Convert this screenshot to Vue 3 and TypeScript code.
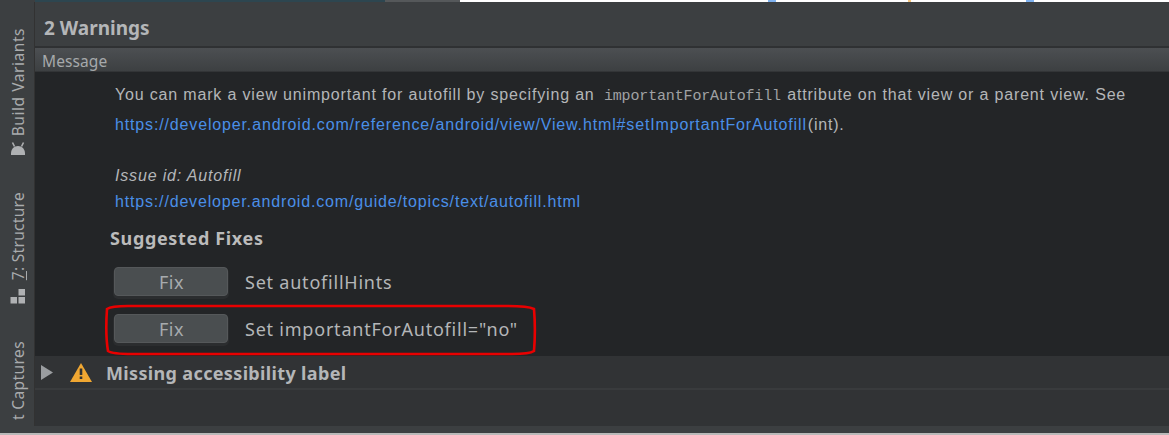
<script setup lang="ts">
const fixes = [
  { label: 'Set autofillHints', marked: false },
  { label: 'Set importantForAutofill="no"', marked: true },
]
</script>

<template>
  <div class="window">
    <div class="topstrip">
      <span class="seg seg-side"></span>
      <span class="seg seg-teal"></span>
      <span class="seg seg-grey"></span>
      <span class="seg seg-white">
        <i class="bit bit-a"></i>
        <i class="bit bit-b"></i>
        <i class="bit bit-c"></i>
      </span>
    </div>
    <div class="body">
      <aside class="sidebar">
        <div class="tab tab-build">
          <span class="tab-label">Build Variants</span>
          <svg class="tab-icon" width="16" height="14" viewBox="0 0 16 14">
            <path d="M1 12.5C1 8 4 5 8 5s7 3 7 7.5z" fill="#afb1b3" />
            <path d="M1 14h14v-2H1z" fill="#afb1b3" />
            <path d="M4.5 5.5 2.5 1.5M11.5 5.5l2-4" stroke="#afb1b3" stroke-width="1.6" />
          </svg>
        </div>
        <div class="tab tab-structure">
          <span class="tab-label"><u>7</u>: Structure</span>
          <svg class="tab-icon tab-icon-far" width="16" height="15" viewBox="0 0 16 15">
            <rect x="0.5" y="8" width="6.5" height="6.5" fill="#afb1b3" />
            <rect x="8.5" y="8" width="6.5" height="6.5" fill="#afb1b3" />
            <rect x="8.5" y="0" width="6.5" height="6.5" fill="#afb1b3" />
          </svg>
        </div>
        <div class="tab tab-captures">
          <span class="tab-label">t Captures</span>
        </div>
      </aside>

      <main class="main">
        <header class="title-bar">2 Warnings</header>
        <div class="column-head">Message</div>
        <section class="details">
          <p class="line line-first">
            You can mark a view unimportant for autofill by specifying an
            <code>importantForAutofill</code> attribute on that view or a parent view. See
          </p>
          <p class="line line-url">
            <a>https://developer.android.com/reference/android/view/View.html#setImportantForAutofill</a><span class="tail">(int).</span>
          </p>
          <p class="line line-issue"><em>Issue id: Autofill</em></p>
          <p class="line line-guide">
            <a>https://developer.android.com/guide/topics/text/autofill.html</a>
          </p>
          <h3 class="fixes-title">Suggested Fixes</h3>
          <div class="fixes">
            <div v-for="fix in fixes" :key="fix.label" class="fix-row">
              <button class="fix-btn" type="button">Fix</button>
              <span class="fix-label">{{ fix.label }}</span>
              <svg v-if="fix.marked" class="marker" width="434" height="53" viewBox="0 0 434 53">
                <path
                  d="M24 3C12 3 6 4 3 6 2 20 2 36 4 48c3 2 10 3 24 3h380c12 0 19-1 22-3 1-12 1-30 0-42-4-2-12-3-26-3z"
                  fill="none"
                  stroke="#e80000"
                  stroke-width="2.6"
                />
              </svg>
            </div>
          </div>
        </section>
        <div class="issue-row">
          <svg class="arrow" width="12" height="15" viewBox="0 0 12 15">
            <path d="M0 0l12 7.5L0 15z" fill="#9a9da0" />
          </svg>
          <svg class="warn" width="22" height="19" viewBox="0 0 22 19">
            <path d="M11 0l11 19H0z" fill="#f0a732" />
            <path d="M9.7 5.5h2.6v6.5H9.7zM9.7 13.5h2.6V16H9.7z" fill="#2f3133" />
          </svg>
          <span class="issue-name">Missing accessibility label</span>
        </div>
        <div class="empty-row"></div>
      </main>
    </div>
    <div class="footer-bar"></div>
    <div class="bottom-edge"></div>
  </div>
</template>

<style>
html,
body {
  margin: 0;
  background: #3c3f41;
}
</style>

<style scoped>
.window {
  width: 1169px;
  height: 435px;
  display: flex;
  flex-direction: column;
  overflow: hidden;
  background: #3c3f41;
  font-family: 'Noto Sans', sans-serif;
  color: #bbbbbb;
}
.topstrip {
  display: flex;
  height: 2px;
  flex: none;
}
.seg-side {
  width: 35px;
  background: #3c3f41;
}
.seg-teal {
  width: 350px;
  background: #2d4650;
}
.seg-grey {
  width: 75px;
  background: #55585a;
}
.seg-white {
  flex: 1;
  background: #fff;
  display: flex;
}
.bit {
  display: block;
  height: 2px;
}
.bit-a {
  width: 8px;
  margin-left: 308px;
  background: #7fb2f0;
}
.bit-b {
  width: 3px;
  margin-left: 132px;
  background: #f5c77e;
}
.bit-c {
  width: 8px;
  margin-left: 115px;
  background: #7fb2f0;
}
.body {
  flex: none;
  height: 424px;
  display: flex;
}
.sidebar {
  width: 33px;
  flex: none;
  margin-left: 1px;
  border-right: 1px solid #323232;
  display: flex;
  flex-direction: column;
  align-items: center;
  overflow: hidden;
  font-size: 15.5px;
  letter-spacing: 0.55px;
  color: #a9abad;
}
.tab {
  display: flex;
  flex-direction: column;
  align-items: center;
  flex: none;
}
.tab-build {
  margin-top: 26px;
}
.tab-structure {
  margin-top: 37px;
  letter-spacing: 0.3px;
}
.tab-captures {
  margin-top: 37px;
  letter-spacing: 0.4px;
}
.tab-label {
  writing-mode: vertical-rl;
  transform: rotate(180deg);
  white-space: nowrap;
  line-height: 18px;
}
.tab-icon {
  margin-top: 5px;
  display: block;
}
.tab-icon-far {
  margin-top: 8px;
}
.main {
  flex: 1;
  min-width: 0;
  display: flex;
  flex-direction: column;
}
.title-bar {
  height: 46px;
  flex: none;
  box-sizing: border-box;
  border-bottom: 2px solid #2f3133;
  padding-left: 9px;
  font-size: 19px;
  font-weight: 700;
  line-height: 52px;
  color: #b4b6b8;
}
.column-head {
  height: 24px;
  flex: none;
  box-sizing: border-box;
  padding-left: 7px;
  font-size: 15.5px;
  letter-spacing: 0.1px;
  line-height: 27px;
  color: #a6a9ab;
  background: linear-gradient(#4c4f52, #3d4042);
  border-bottom: 1px solid #333537;
}
.details {
  height: 284px;
  flex: none;
  box-sizing: border-box;
  padding-left: 80px;
  background: #232527;
}
.line {
  margin: 0;
  font-family: 'Liberation Sans', Arial, sans-serif;
  font-size: 16px;
  letter-spacing: 0.83px;
  line-height: 20px;
  white-space: nowrap;
  color: #b4b6b8;
}
.line-first {
  padding-top: 13px;
}
.line-url {
  margin-top: 8px;
  letter-spacing: 0.85px;
}
.line-issue {
  margin-top: 31px;
}
.line-guide {
  margin-top: 6px;
}
.line a {
  color: #4a8fe7;
}
.line em {
  font-style: italic;
}
.tail {
  margin-left: 1px;
  letter-spacing: 0.8px;
}
code {
  font-family: 'Liberation Mono', monospace;
  font-size: 15px;
  letter-spacing: -0.15px;
  padding: 0 1px 0 4px;
  color: #a0a2a4;
}
.fixes-title {
  margin: 13px 0 0 -5px;
  font-size: 18px;
  font-weight: 700;
  letter-spacing: 0.65px;
  line-height: 26px;
  color: #bbbbbb;
}
.fixes {
  margin-top: 16px;
  display: flex;
  flex-direction: column;
  gap: 18px;
}
.fix-row {
  position: relative;
  height: 29px;
  display: flex;
  align-items: center;
  gap: 17px;
}
.fix-btn {
  width: 114px;
  height: 29px;
  box-sizing: border-box;
  margin-left: -1px;
  padding: 2px 0 0 1px;
  border: 1px solid #55585a;
  border-radius: 4px;
  background: #4a4e50;
  box-shadow: 0 2px 0 1px #2b2d2f;
  font-family: inherit;
  font-size: 18px;
  letter-spacing: 0.5px;
  line-height: 25px;
  color: #a7abae;
}
.fix-label {
  font-size: 18px;
  letter-spacing: 0.78px;
  line-height: 29px;
  padding-top: 2px;
  white-space: nowrap;
  color: #b4b6b8;
}
.marker {
  position: absolute;
  left: -11px;
  top: -11px;
  pointer-events: none;
}
.issue-row {
  height: 32px;
  flex: none;
  display: flex;
  align-items: center;
  padding-left: 6px;
  background: #313335;
  border-bottom: 2px solid #393b3d;
}
.warn {
  margin-left: 17px;
}
.issue-name {
  margin-left: 14px;
  padding-top: 2px;
  font-size: 18px;
  font-weight: 700;
  letter-spacing: 0.35px;
  color: #b4b6b8;
}
.empty-row {
  flex: 1;
  background: #313335;
}
.footer-bar {
  flex: 1;
  background: #3c3f41;
}
.bottom-edge {
  height: 2px;
  flex: none;
  background: #b9b9b9;
}
</style>
